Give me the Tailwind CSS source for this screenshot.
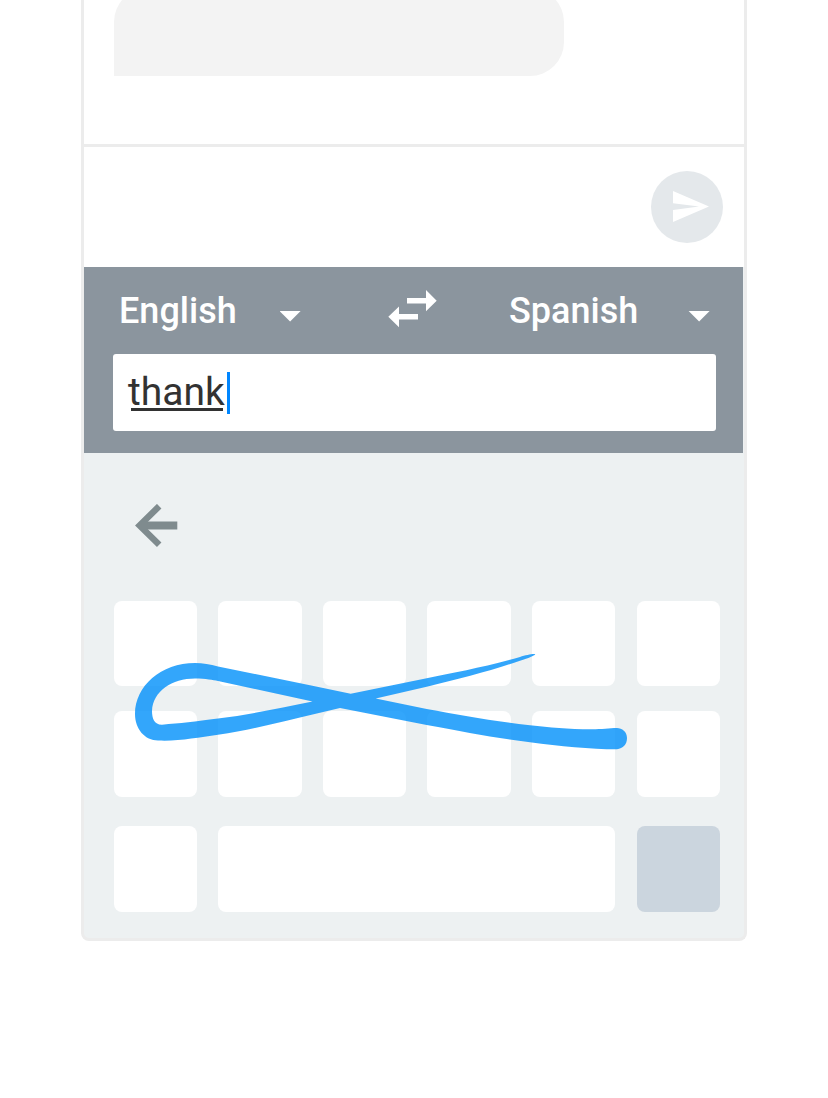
<!DOCTYPE html>
<html lang="en">
<head>
<meta charset="utf-8">
<title>Keyboard translate</title>
<script src="https://cdn.jsdelivr.net/npm/@tailwindcss/browser@4"></script>
</head>
<body class="bg-white h-[1098px] overflow-hidden font-['Roboto',sans-serif]">
<main class="relative mx-auto w-[666px] h-[941px] flex flex-col border-[3px] border-t-0 border-[#ececec] rounded-b-lg overflow-hidden bg-[#edf1f2]">
  <section class="h-[147px] shrink-0 bg-white border-b-[3px] border-[#ececec] pl-[30px]">
    <div class="-mt-3 w-[450px] h-[88px] bg-[#f3f3f3] rounded-[34px] rounded-bl-none"></div>
  </section>
  <section class="h-[120px] shrink-0 bg-white flex items-center justify-end pr-[21px]">
    <button class="size-[72px] rounded-full bg-[#e4e8eb]" aria-label="Send">
      <svg class="size-[72px]" viewBox="0 0 72 72" fill="#fff"><path d="M22 20 58 35.500 22 51V39L48 35.500 22 32.200Z"/></svg>
    </button>
  </section>
  <section class="h-[186px] w-[659px] shrink-0 bg-[#8b959e] pl-[29px] pr-[27px]">
    <div class="h-[87px] flex items-center text-white text-[36px] font-medium">
      <span class="ml-[6px] w-[161px] pt-[2px] leading-[87px]">English</span>
      <svg class="mt-[11px] w-[21px] h-[11px]" viewBox="0 0 21 11" fill="#fff"><path d="M-.4 0H20.600L10.100 10.500Z"/></svg>
      <svg class="ml-[87px] -mt-[3px] w-[49px] h-[38px]" viewBox="0 0 49 38" fill="#fff"><path d="M38 0 48.700 10.700 38 21.300V13.500H19V8H38ZM11 16.500V24H30V29.500H11V37.300L.3 26.800Z"/></svg>
      <span class="ml-[72px] w-[180px] pt-[2px] leading-[87px]">Spanish</span>
      <svg class="shrink-0 mt-[11px] w-[21px] h-[11px] overflow-visible" viewBox="0 0 21 11" fill="#fff"><path d="M-.4 0H20.600L10.100 10.500Z"/></svg>
    </div>
    <div class="h-[77px] rounded-[3px] bg-white flex items-center pl-[15px]">
      <span class="relative text-[39px] leading-[77px] text-[#323232]">thank<span class="absolute left-[3px] top-[54px] w-[92px] h-[2.5px] bg-[#323232]"></span></span>
      <span class="ml-[2px] w-[3px] h-[42px] bg-[#0086ff]"></span>
    </div>
  </section>
  <section class="flex-1 pl-[29.600px] pr-[24px]">
    <div class="h-[147.600px] pt-[51px] pl-[21px]">
      <svg class="w-[43px] h-[44px]" viewBox="0 0 43 44" fill="none" stroke="#7f8b8e"><path d="M24.200 2.200 4.600 21.500 24.200 40.800" stroke-width="6.400"/><path d="M5 21.500H42.300" stroke-width="8"/></svg>
    </div>
    <div class="grid grid-cols-6 w-[606.400px] gap-x-[21.300px] gap-y-[24.300px] auto-rows-[85.900px]">
      <div class="bg-white rounded-lg"></div><div class="bg-white rounded-lg"></div><div class="bg-white rounded-lg"></div><div class="bg-white rounded-lg"></div><div class="bg-white rounded-lg"></div><div class="bg-white rounded-lg"></div>
      <div class="bg-white rounded-lg"></div><div class="bg-white rounded-lg"></div><div class="bg-white rounded-lg"></div><div class="bg-white rounded-lg"></div><div class="bg-white rounded-lg"></div><div class="bg-white rounded-lg"></div>
    </div>
    <div class="mt-[29.500px] grid grid-cols-6 w-[606.400px] gap-x-[21.300px] auto-rows-[85.900px]">
      <div class="bg-white rounded-lg"></div><div class="bg-white rounded-lg col-span-4"></div><div class="bg-[#cbd5de] rounded-lg"></div>
    </div>
  </section>
  <!-- glide-typing trail over the keys -->
  <svg class="absolute left-[36px] top-[640px] w-[520px] h-[120px]" viewBox="120 640 520 120" fill="#0090fa" fill-opacity=".8">
    <path d="M535.300 654.300C533 653.500 526 655.300 520 657C485 667 455 672.500 426.700 678.300L350.700 693.700L312.500 701.500C280 708 250 714.500 218 718.600C195 721.500 180 723.500 162 724.700C154 724.700 152 718 152 711C153 691 172 678.500 195 678.500C206 678.500 213 680 218 681L312.500 701.500L340 708L426.700 725C465 732 495 738 530 742.200C560 746 590 749.300 617 749.300C623 748.500 627 744.500 627 738C627 731.500 622 728.300 617 728C609 728 602 729.300 592 729.300C567 729 550 727.500 530 725.200C492 721 460 715 426.700 709L375.700 698.500L350.700 693.700L310 685.200L218 666.400C210 664.500 203 663 195 663C161 663 135 686 135 714C135 729 145 740.500 158 740.500C178 741.500 198 737.500 218 734.800C255 729 285 721 320 712.700L340 708L375.700 698.500L426.700 686.700C460 679 495 669.500 520 660.700C529 658 534 656 535.300 654.300Z"/>
  </svg>
</main>
</body>
</html>
